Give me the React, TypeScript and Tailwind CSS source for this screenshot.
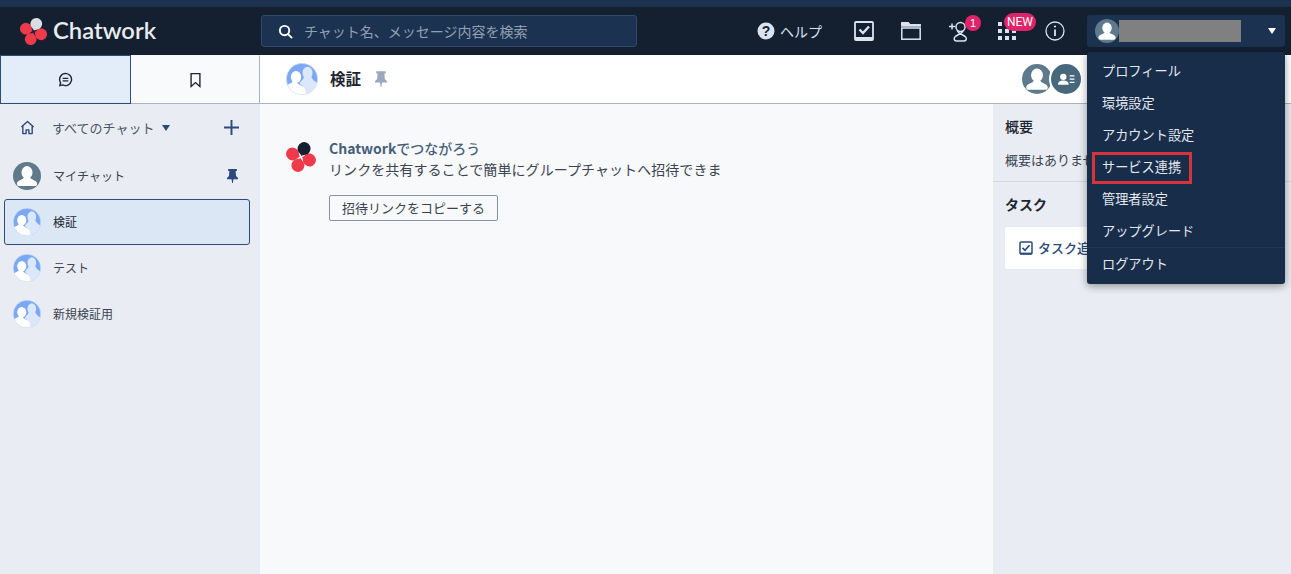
const JP = 'font-["Noto_Sans_CJK_JP",sans-serif]';

const MENU_ITEMS = ['プロフィール', '環境設定', 'アカウント設定', 'サービス連携', '管理者設定', 'アップグレード', 'ログアウト'];

function Logo({ top, className }: { top: string; className?: string }) {
  const petal = 'M1 0C3-1 3-6 8.500-6A6 6 0 1 1 8.500 6C3 6 3 1 1 0Z';
  return (
    <svg viewBox="-15 -15 30 30" className={className}>
      <path d={petal} transform="rotate(20)" fill="#ee3a4a" />
      <path d={petal} transform="rotate(110)" fill="#ee3a4a" />
      <path d={petal} transform="rotate(200)" fill="#ee3a4a" />
      <path d={petal} transform="rotate(290)" fill={top} />
    </svg>
  );
}

function GroupAvatar({ className }: { className?: string }) {
  return (
    <svg viewBox="0 0 32 32" className={className}>
      <clipPath id="grp"><circle cx="16" cy="16" r="15.700" /></clipPath>
      <g clipPath="url(#grp)">
        <rect width="32" height="32" fill="#7aa8f5" />
        <ellipse cx="21.500" cy="10" rx="5" ry="6.200" fill="#dbe7fb" />
        <path d="M18 14c-.5 3-4 4-4.500 7 4 1 5 5 5 11h14V21c-2-2-5.500-3-7-7z" fill="#dbe7fb" />
        <ellipse cx="10" cy="14" rx="5.200" ry="6" fill="#fff" />
        <path d="M7 18c0 2-7 3-7 7v7h20c0-6-2-9-6-10-2-1-3-2-3-4z" fill="#fff" />
      </g>
      <circle cx="16" cy="16" r="15.700" fill="none" stroke="#dfe5f0" strokeWidth=".6" />
    </svg>
  );
}

function UserAvatar({ className }: { className?: string }) {
  return (
    <svg viewBox="0 0 32 32" className={className}>
      <circle cx="16" cy="16" r="16" fill="#5f7a8b" />
      <ellipse cx="16" cy="12" rx="6.300" ry="7.300" fill="#fff" />
      <path d="M12 18c0 2.500-7.500 2.500-7.500 7 0 1.500 1 2.500 2.500 2.500h18c1.500 0 2.500-1 2.500-2.500 0-4.500-7.500-4.500-7.500-7z" fill="#fff" />
    </svg>
  );
}

function PinIcon({ color, className }: { color: string; className?: string }) {
  return (
    <svg viewBox="0 0 14 18" className={className} fill={color}>
      <path d="M1.500 0h11v2.500H11L11.500 9l2.500 2.500v1.500H8.200L7.500 18h-1L5.800 13H0v-1.500L2.500 9 3 2.500H1.500z" />
    </svg>
  );
}

function Header() {
  return (
    <header className="flex items-center h-12 bg-[#141f30] shrink-0">
      <div className="flex items-center w-[261px] pl-[19px] shrink-0">
        <Logo top="#dadde2" className="w-[29px] h-[29px] shrink-0" />
        <span className='ml-[5px] text-[23.800px] font-semibold text-[#e9ebee] font-["Lato",sans-serif]'>Chatwork</span>
      </div>
      <div className="flex items-center w-[376px] h-8 pl-[16px] bg-[#1b3350] border border-[#33496a] rounded-[3px] shrink-0">
        <svg viewBox="0 0 16 16" className="w-[15px] h-[15px] shrink-0" fill="none" stroke="#fff" strokeWidth="2" strokeLinecap="round">
          <circle cx="7" cy="7" r="5" />
          <path d="M11 11l3.500 3.500" />
        </svg>
        <span className="ml-[11px] text-sm text-[#93a0b3]">チャット名、メッセージ内容を検索</span>
      </div>
      <div className="flex items-center ml-[120px] shrink-0">
        <svg viewBox="0 0 18 18" className="w-[18px] h-[18px]">
          <circle cx="9" cy="9" r="8.500" fill="#dbe3ef" />
          <text x="9" y="14" textAnchor="middle" fontSize="14" fontWeight="700" fill="#141f30" fontFamily="Liberation Sans">?</text>
        </svg>
        <span className="ml-[5px] w-[43px] text-sm text-[#dbe3ef]">ヘルプ</span>
      </div>
      <svg viewBox="0 0 20 20" className="ml-[31px] w-5 h-5 shrink-0" fill="none" stroke="#dbe3ef">
        <rect x="1" y="1" width="18" height="18" rx="1" strokeWidth="1.800" />
        <path d="M1 17.500h18" strokeWidth="3" />
        <path d="M5.500 8.500l3.500 3.500 6-6.500" strokeWidth="2.400" />
      </svg>
      <svg viewBox="0 0 20 18" className="ml-[27px] w-5 h-[18px] shrink-0" fill="none" stroke="#dbe3ef" strokeWidth="1.500">
        <path d="M.8 2.800V.8h6.500l1.500 2h10.400v1.200H.8z" fill="#dbe3ef" />
        <rect x=".8" y="6" width="18.400" height="11.200" />
      </svg>
      <div className="relative ml-[28px] w-[19px] h-5 shrink-0">
        <svg viewBox="0 0 20 21" className="w-[20px] h-[21px]" fill="none" stroke="#dbe3ef" strokeWidth="1.500">
          <path d="M0 5.500h6M3 2.500v6" />
          <circle cx="11.500" cy="6" r="4.500" />
          <path d="M8.500 9.500c0 3.500 7 4 8.500 7 1 2-.5 3.500-2 3.500H7.500c-1.500 0-3-1.500-2-3.500 1.500-3 8.500-3.500 8.500-7" />
        </svg>
        <span className='absolute -top-[6px] left-[16px] flex items-center justify-center w-4 h-4 rounded-full bg-[#e0246a] text-[11px] text-white font-["Liberation_Sans",sans-serif]'>1</span>
      </div>
      <div className="relative ml-[30px] w-[18px] h-[18px] grid grid-cols-3 gap-[3px] shrink-0">
        {Array.from({ length: 9 }).map((_, i) => (
          <span key={i} className="bg-[#dbe3ef]" />
        ))}
        <span className='absolute -top-[9px] left-[6px] flex items-center justify-center w-8 h-[18px] rounded-full bg-[#e0246a] text-xs text-white font-["Roboto",sans-serif]'>NEW</span>
      </div>
      <svg viewBox="0 0 20 20" className="ml-[29px] w-5 h-5 shrink-0" fill="none" stroke="#dbe3ef" strokeWidth="1.300">
        <circle cx="10" cy="10" r="9" />
        <path d="M10 8.500v6.500" strokeWidth="1.800" />
        <circle cx="10" cy="5.500" r="1.100" fill="#dbe3ef" stroke="none" />
      </svg>
      <div className="flex items-center ml-[22px] w-[198px] h-8 bg-[#1b3350] rounded-[3px] pl-2 shrink-0">
        <UserAvatar className="w-6 h-6 shrink-0" />
        <span className="w-[122px] h-[22px] bg-[#808080] shrink-0" />
        <span className="ml-[27px] w-0 h-0 border-x-[4.500px] border-x-transparent border-t-[6px] border-t-white" />
      </div>
    </header>
  );
}

function ChatRow({ name, selected, pinned, avatar }: { name: string; selected?: boolean; pinned?: boolean; avatar: React.ReactNode }) {
  return (
    <div className={`flex items-center h-[46px] mx-1 w-[246px] pl-2 pr-[10px] rounded-[3px] border ${selected ? 'bg-[#dce7f5] border-[#2f4a7c]' : 'border-transparent'}`}>
      {avatar}
      <span className={`ml-3 text-xs flex-1 ${selected ? 'text-[#1e2530]' : 'text-[#3a4350]'}`}>{name}</span>
      {pinned && <PinIcon color="#2b4a7d" className="w-[11px] h-[16px] mr-[1px]" />}
    </div>
  );
}

function Sidebar() {
  return (
    <aside className="flex flex-col w-[260px] bg-[#e9edf3] shrink-0">
      <div className="flex h-[49px] shrink-0">
        <div className="flex items-center justify-center w-[131px] bg-[#e3edf9] border border-[#2f4a7c]">
          <svg viewBox="0 0 16 16" className="w-[15px] h-[15px]" fill="none" stroke="#1e2530" strokeWidth="1.500">
            <path d="M8 1.500a6.500 6.500 0 1 1-3 12.300l-3 .7.800-3A6.500 6.500 0 0 1 8 1.500z" />
            <path d="M5 6.800h6M5 9.500h6" strokeWidth="1.300" />
          </svg>
        </div>
        <div className="flex items-center justify-center w-[129px] bg-[#f8fafc] border-y border-r border-y-[#a9b3c4] border-r-[#a9b3c4] border-t-transparent">
          <svg viewBox="0 0 12 16" className="w-[11px] h-[16px]" fill="none" stroke="#1e2530" strokeWidth="1.500">
            <path d="M1.200 1h9.600v14L6 10.800 1.200 15z" />
          </svg>
        </div>
      </div>
      <div className="flex items-center h-[47px] mb-[2px] pl-[20px] pr-[21px] shrink-0">
        <svg viewBox="0 0 16 16" className="w-[15px] h-[15px] shrink-0" fill="none" stroke="#2b4a7d" strokeWidth="1.500" strokeLinejoin="round">
          <path d="M1.500 7.500L8 1.500l6.500 6M3 6.500v8h3.500v-4h3v4H13v-8" />
        </svg>
        <span className="ml-[17px] text-[13px] text-[#4a5568]">すべてのチャット</span>
        <span className="ml-[8px] w-0 h-0 border-x-[4px] border-x-transparent border-t-[6px] border-t-[#2b4a7d]" />
        <svg viewBox="0 0 14 14" className="ml-auto w-[15px] h-[15px]" stroke="#2b4a7d" strokeWidth="1.800">
          <path d="M7 0v14M0 7h14" />
        </svg>
      </div>
      <div>
        <ChatRow name="マイチャット" pinned avatar={<UserAvatar className="w-7 h-7 shrink-0" />} />
        <ChatRow name="検証" selected avatar={<GroupAvatar className="w-7 h-7 shrink-0" />} />
        <ChatRow name="テスト" avatar={<GroupAvatar className="w-7 h-7 shrink-0" />} />
        <ChatRow name="新規検証用" avatar={<GroupAvatar className="w-7 h-7 shrink-0" />} />
      </div>
    </aside>
  );
}

function RoomHeader() {
  return (
    <div className="flex items-center h-[49px] pl-[26px] bg-white border-b border-[#a9b3c4] shrink-0">
      <GroupAvatar className="w-8 h-8 shrink-0" />
      <span className="ml-[12px] text-[15.500px] font-bold text-[#1e2530]">検証</span>
      <PinIcon color="#9aa8bf" className="ml-[14px] w-[12px] h-[16px]" />
      <div className="flex items-center ml-auto mr-[208px]">
        <UserAvatar className="w-[30px] h-[30px]" />
        <div className="relative -ml-[3px] flex items-center justify-center w-[34px] h-[34px] rounded-full bg-[#47687c] border-2 border-white">
          <svg viewBox="0 0 16 12" className="w-[17px] h-[13px]" fill="#fff">
            <circle cx="5" cy="3.500" r="3" />
            <path d="M0 11c0-3 2-4 5-4s5 1 5 4z" />
            <path d="M11 2h4.500v1.200H11zM11 5h4.500v1.200H11zM11 8h4.500v1.200H11z" />
          </svg>
        </div>
      </div>
    </div>
  );
}

function RightPanel() {
  return (
    <div className="w-[298px] h-full bg-[#e9edf3] shrink-0">
      <div className="h-[78px] pl-3 pt-[12px] border-b border-[#d3d8e0]">
        <div className="text-sm font-medium leading-5 text-[#1e2530]">概要</div>
        <div className="mt-[14px] text-[13px] leading-5 text-[#3a4350]">概要はありません</div>
      </div>
      <div className="pl-3 pr-2 pt-[12px]">
        <div className="text-sm font-bold leading-5 text-[#1e2530]">タスク</div>
        <div className="flex items-center h-[42px] mt-[13px] pl-[14px] bg-white rounded-[3px]">
          <svg viewBox="0 0 14 14" className="w-[14px] h-[14px]" fill="none" stroke="#2b4a7d">
            <rect x="1" y="1" width="12" height="12" rx="1" strokeWidth="1.500" />
            <path d="M1 12.500h12" strokeWidth="1.800" />
            <path d="M3.500 6.800l2.500 2.500 4.500-5" strokeWidth="1.700" />
          </svg>
          <span className="ml-[5px] text-[13px] font-medium text-[#2b4a7d]">タスク追加</span>
        </div>
      </div>
    </div>
  );
}

function AccountMenu() {
  return (
    <div className="absolute left-[1087px] top-[52px] w-[198px] h-[232px] pt-[3px] bg-[#182d4a] rounded-[3px] shadow-[0_2px_8px_rgba(0,0,0,0.4)] z-10">
      {MENU_ITEMS.map((item) => (
        <div key={item} className={`relative flex items-center h-8 pl-[15px] text-[13.200px] text-[#e3e8ef] ${item === 'ログアウト' ? 'border-t border-[#22385a]' : ''}`}>
          {item === 'サービス連携' && (
            <span className="absolute left-[5px] top-[1px] w-[100px] h-[32px] border-[3px] border-[#d7333a]" />
          )}
          <span className="relative">{item}</span>
        </div>
      ))}
    </div>
  );
}

export default function App() {
  return (
    <div className={`relative flex flex-col w-[1291px] h-[574px] overflow-hidden ${JP}`}>
      <div className="h-[7px] bg-[#1b3350] shrink-0" />
      <Header />
      <div className="flex flex-1 min-h-0">
        <Sidebar />
        <main className="flex flex-col flex-1 min-w-0">
          <RoomHeader />
          <div className="flex flex-1 min-h-0 bg-[#f8f9fb]">
            <div className="flex flex-1 min-w-0 pl-[25px] pt-[34px]">
              <Logo top="#141f30" className="mt-[3px] w-[32px] h-[32px] shrink-0" />
              <div className="ml-[12px]">
                <div className="text-sm leading-5 font-medium text-[#47607a]"><span className="font-bold">Chatwork</span>でつながろう</div>
                <div className="mt-[1px] text-sm leading-5 tracking-[0.07px] text-[#3a4350]">リンクを共有することで簡単にグループチャットへ招待できま</div>
                <button className="mt-[16px] flex items-center justify-center w-[169px] h-[26px] text-[13px] text-[#3a4350] bg-[#f8f9fb] border border-[#8793a6] rounded-[2px]">招待リンクをコピーする</button>
              </div>
            </div>
            <RightPanel />
          </div>
        </main>
      </div>
      <AccountMenu />
    </div>
  );
}
